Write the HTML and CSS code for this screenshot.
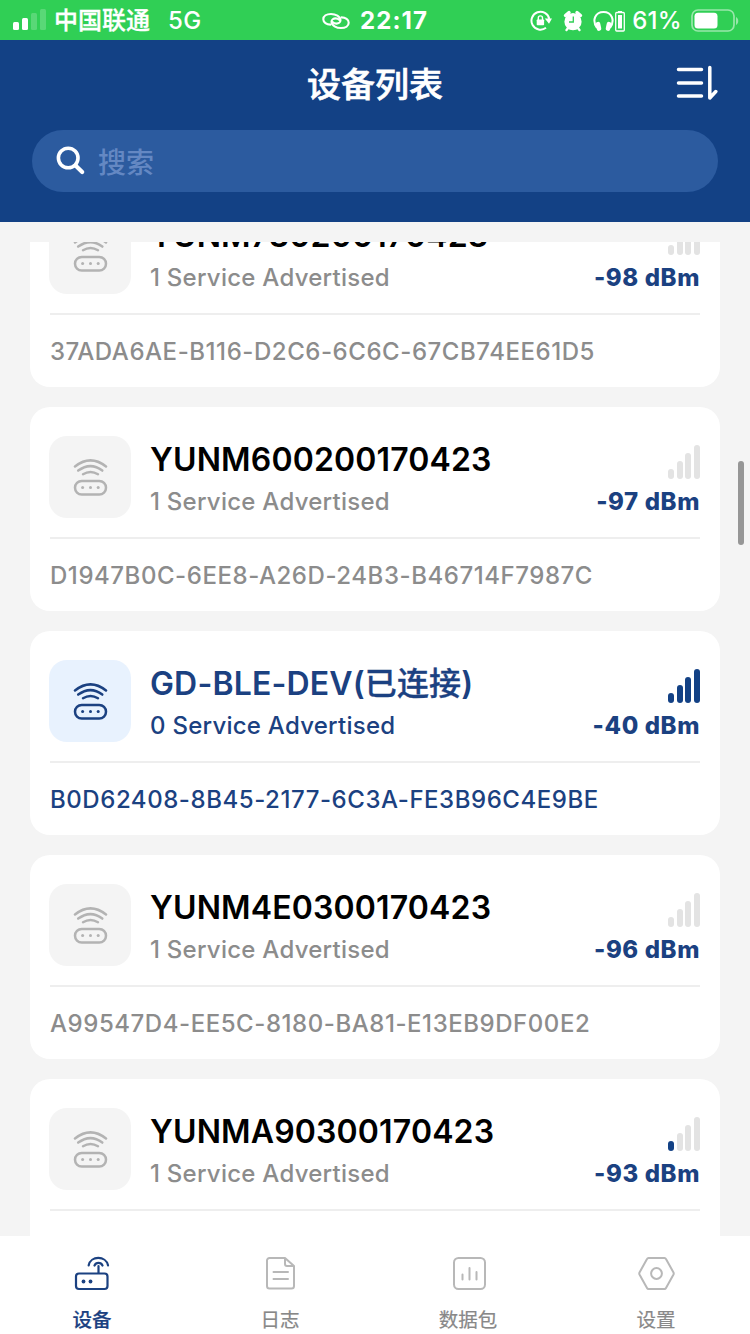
FILE: index.html
```html
<!DOCTYPE html>
<html lang="zh-CN">
<head>
    <meta charset="UTF-8">
    <meta name="viewport" content="width=device-width, initial-scale=1.0">
    <title>设备列表</title>
    <link rel="stylesheet" href="styles.css">
</head>
<body>
    <svg class="sprite">
        <symbol id="router" viewBox="0 0 36 40">
            <g fill="none" stroke="currentColor" stroke-width="2.5" stroke-linecap="round">
                <path d="M3 9.5Q18.5-2.8 34 9.5"/>
                <path d="M6.2 13.6Q18.5 4.600 30.3 13.6"/>
                <path d="M11 17.2Q18.5 12.600 26 17.2"/>
                <rect x="3" y="24" width="31" height="13.5" rx="6.750"/>
            </g>
            <g fill="currentColor">
                <circle cx="10.6" cy="30.4" r="1.5"/>
                <circle cx="18.5" cy="30.4" r="1.5"/>
                <circle cx="26.2" cy="30.4" r="1.5"/>
            </g>
        </symbol>
    </svg>

    <div class="status-bar">
        <div class="status-left">
            <svg width="36" height="24" viewBox="0 0 36 24" fill="#fff">
                <rect x="1" y="16" width="6" height="8" rx="1.5"/>
                <rect x="10" y="12" width="6" height="12" rx="1.5"/>
                <rect x="19" y="7" width="6" height="17" rx="1.5" opacity=".2"/>
                <rect x="28" y="3" width="6" height="21" rx="1.5" opacity=".2"/>
            </svg>
            <span class="carrier">中国联通</span>
            <span class="network">5G</span>
        </div>
        <div class="status-center">
            <svg width="28" height="18" viewBox="0 0 28 18" fill="none" stroke="#fff" stroke-width="2.1" stroke-linecap="round">
                <path d="M8.500 12.600C4.500 12.600 1.300 10.300 1.300 7.300C1.300 4 4.500 2 9 2C13.500 2 18.500 4.500 18.500 8.300C18.500 10.300 16.500 11.600 14.500 11.600C12.800 11.600 11.500 11 10.500 10"/>
                <path d="M19.500 5.400C23.500 5.400 26.700 7.700 26.700 10.700C26.700 14 23.500 16 19 16C14.500 16 9.500 13.500 9.500 9.700C9.500 7.700 11.500 6.400 13.500 6.400C15.200 6.400 16.500 7 17.500 8"/>
            </svg>
            <span class="clock">22:17</span>
        </div>
        <div class="status-right">
            <svg class="lock" width="22" height="22" viewBox="0 0 22 22">
                <path d="M16 17.800A9 9 0 1 1 19.300 9" fill="none" stroke="#fff" stroke-width="2"/>
                <path d="M14.800 8.500h7.200l-3 5.300z" fill="#fff"/>
                <rect x="6.700" y="9.500" width="7.400" height="5.800" rx=".8" fill="#fff"/>
                <path d="M8.300 10V8a2.100 2.100 0 0 1 4.200 0v2" fill="none" stroke="#fff" stroke-width="1.400"/>
            </svg>
            <svg class="alarm" width="20" height="22" viewBox="0 0 20 22">
                <path d="M2.500 5.500L6 2.600M17.500 5.500L14 2.600" stroke="#fff" stroke-width="3.400" stroke-linecap="round"/>
                <path d="M3.500 20l2.500-3M16.500 20l-2.500-3" stroke="#fff" stroke-width="2.400" stroke-linecap="round"/>
                <circle cx="10" cy="11.700" r="8.600" fill="#fff"/>
                <path d="M10.300 6.500v5.500H6" fill="none" stroke="#30cf55" stroke-width="1.300"/>
            </svg>
            <svg class="headphones" width="33" height="24" viewBox="0 0 33 24">
                <path d="M4 19C-1.500 11 2.500 3 10.500 3S22.500 11 17 19" fill="none" stroke="#fff" stroke-width="2"/>
                <rect x="3.200" y="13" width="4.500" height="9" rx="2" fill="#fff" transform="rotate(-12 5 17)"/>
                <rect x="13.300" y="13" width="4.500" height="9" rx="2" fill="#fff" transform="rotate(12 16 17)"/>
                <rect x="22.700" y="3.500" width="8.600" height="18.500" rx="1" fill="none" stroke="#fff" stroke-width="1.300"/>
                <path d="M25 2h4v1.500h-4zM25 6h4v13.500h-4z" fill="#fff"/>
            </svg>
            <span class="percent">61%</span>
            <svg class="battery" width="48" height="24" viewBox="0 0 48 24">
                <rect x="1" y="1" width="42" height="21" rx="6" fill="none" stroke="#fff" stroke-width="1.700" opacity=".5"/>
                <rect x="3.500" y="3.700" width="23" height="15.800" rx="3.500" fill="#fff"/>
                <path d="M45 8c3 1.500 3 6.500 0 8z" fill="#fff" opacity=".5"/>
            </svg>
        </div>
    </div>

    <header class="header">
        <div class="title-row">
            <h1>设备列表</h1>
            <svg class="sort" width="44" height="38" viewBox="0 0 44 38" fill="none" stroke="#fff" stroke-width="3.500" stroke-linecap="round" stroke-linejoin="round">
                <path d="M4.500 5.500h23M4.500 19h23M4.500 32h23M35.800 3.500v30.500l6-6.500"/>
            </svg>
        </div>
        <div class="search">
            <svg width="30" height="30" viewBox="0 0 30 30" fill="none" stroke="#fff" stroke-width="3.600" stroke-linecap="round">
                <circle cx="12.200" cy="12" r="9.800"/>
                <path d="M19.500 19.500l6.700 6.500" stroke-width="4.200"/>
            </svg>
            <span>搜索</span>
        </div>
    </header>

    <main class="list">
        <div class="card">
            <div class="info">
                <div class="tile"><svg><use href="#router"/></svg></div>
                <div class="text">
                    <div class="name">YUNM730200170423</div>
                    <div class="service">1 Service Advertised</div>
                </div>
                <div class="rssi">
                    <div class="bars"><i></i><i></i><i></i><i></i></div>
                    <div class="dbm">-98 dBm</div>
                </div>
            </div>
            <div class="uuid">37ADA6AE-B116-D2C6-6C6C-67CB74EE61D5</div>
        </div>
        <div class="card">
            <div class="info">
                <div class="tile"><svg><use href="#router"/></svg></div>
                <div class="text">
                    <div class="name">YUNM600200170423</div>
                    <div class="service">1 Service Advertised</div>
                </div>
                <div class="rssi">
                    <div class="bars"><i></i><i></i><i></i><i></i></div>
                    <div class="dbm">-97 dBm</div>
                </div>
            </div>
            <div class="uuid">D1947B0C-6EE8-A26D-24B3-B46714F7987C</div>
        </div>
        <div class="card connected">
            <div class="info">
                <div class="tile"><svg><use href="#router"/></svg></div>
                <div class="text">
                    <div class="name">GD-BLE-DEV(<span class="state">已连接</span>)</div>
                    <div class="service">0 Service Advertised</div>
                </div>
                <div class="rssi">
                    <div class="bars"><i class="on"></i><i class="on"></i><i class="on"></i><i class="on"></i></div>
                    <div class="dbm">-40 dBm</div>
                </div>
            </div>
            <div class="uuid">B0D62408-8B45-2177-6C3A-FE3B96C4E9BE</div>
        </div>
        <div class="card">
            <div class="info">
                <div class="tile"><svg><use href="#router"/></svg></div>
                <div class="text">
                    <div class="name">YUNM4E0300170423</div>
                    <div class="service">1 Service Advertised</div>
                </div>
                <div class="rssi">
                    <div class="bars"><i></i><i></i><i></i><i></i></div>
                    <div class="dbm">-96 dBm</div>
                </div>
            </div>
            <div class="uuid">A99547D4-EE5C-8180-BA81-E13EB9DF00E2</div>
        </div>
        <div class="card">
            <div class="info">
                <div class="tile"><svg><use href="#router"/></svg></div>
                <div class="text">
                    <div class="name">YUNMA90300170423</div>
                    <div class="service">1 Service Advertised</div>
                </div>
                <div class="rssi">
                    <div class="bars"><i class="on"></i><i></i><i></i><i></i></div>
                    <div class="dbm">-93 dBm</div>
                </div>
            </div>
        </div>
    </main>
    <div class="scrollbar"></div>

    <nav class="tabs">
        <div class="tab active">
            <svg width="40" height="40" viewBox="0 0 40 40" fill="none" stroke="currentColor" stroke-width="2.200" stroke-linecap="round">
                <rect x="4" y="20.500" width="31.500" height="15.500" rx="3"/>
                <path d="M26.500 20v-7M22.500 12.500a4.400 4.400 0 0 1 8 0M16.700 12.300C18.500 2.500 34 2.500 36 12.300"/>
                <circle cx="11.500" cy="28.500" r="1.900" fill="currentColor" stroke="none"/>
                <circle cx="18.500" cy="28.500" r="1.900" fill="currentColor" stroke="none"/>
            </svg>
            <span>设备</span>
        </div>
        <div class="tab">
            <svg width="40" height="40" viewBox="0 0 40 40" fill="none" stroke="currentColor" stroke-width="2" stroke-linecap="round" stroke-linejoin="round">
                <path d="M9.500 5h15.500l9 8v20a2.500 2.500 0 0 1-2.500 2.500h-22A2.500 2.500 0 0 1 7 33V7.500A2.500 2.500 0 0 1 9.500 5zM25 5v6a2 2 0 0 0 2 2h7M13.500 19h14.500M13.500 26h14.500"/>
            </svg>
            <span>日志</span>
        </div>
        <div class="tab">
            <svg width="40" height="40" viewBox="0 0 40 40" fill="none" stroke="currentColor" stroke-width="2" stroke-linecap="round">
                <rect x="6" y="5" width="31" height="31" rx="4.500"/>
                <path d="M14.500 21.500v5M21.500 15v11.500M28.500 19v7.500"/>
            </svg>
            <span>数据包</span>
        </div>
        <div class="tab">
            <svg width="40" height="40" viewBox="0 0 40 40" fill="none" stroke="currentColor" stroke-width="2" stroke-linejoin="round">
                <path d="M12.500 5h16q1 0 1.500 1l7.500 13.500q.5 1 0 2L30 35q-.5 1-1.500 1h-16q-1 0-1.500-1L3.500 21.500q-.5-1 0-2L11 6q.5-1 1.500-1z"/>
                <circle cx="20.500" cy="20.500" r="5.400"/>
            </svg>
            <span>设置</span>
        </div>
    </nav>
</body>
</html>
```
FILE: styles.css
```css
* {
    box-sizing: border-box;
}
body {
    margin: 0;
    width: 750px;
    height: 1334px;
    overflow: hidden;
    display: flex;
    flex-direction: column;
    position: relative;
    background-color: #f4f4f4;
    font-family: Inter, "Noto Sans CJK SC", sans-serif;
}
svg {
    display: block;
    flex: none;
}
.sprite {
    position: absolute;
    width: 0;
    height: 0;
}

/* Status bar */
.status-bar {
    flex: none;
    height: 40px;
    display: grid;
    grid-template-columns: 1fr auto 1fr;
    align-items: center;
    background-color: #30cf55;
    color: #fff;
    line-height: 42px;
}
.status-left, .status-center, .status-right {
    display: flex;
    align-items: center;
}
.status-left {
    padding-left: 12px;
}
.status-left svg {
    margin-top: -6px;
}
.carrier {
    margin-left: 6px;
    font-size: 24px;
    font-weight: 500;
    -webkit-text-stroke: 0.3px #fff;
}
.network {
    margin-left: 18px;
    font-size: 24px;
    font-weight: 500;
    letter-spacing: 0.3px;
}
.status-center svg {
    margin-right: 10px;
}
.clock {
    font-size: 24px;
    font-weight: 700;
    letter-spacing: 1.1px;
}
.status-right {
    justify-content: flex-end;
    padding-right: 11px;
}
.alarm {
    margin-left: 11px;
}
.headphones {
    margin-left: 10px;
}
.percent {
    margin-left: 6px;
    font-size: 24px;
    font-weight: 500;
    letter-spacing: 0.3px;
}
.battery {
    margin-left: 9px;
}

/* Header */
.header {
    flex: none;
    height: 182px;
    padding: 0 32px;
    background-color: #134185;
    color: #fff;
}
.title-row {
    height: 90px;
    display: grid;
    grid-template-columns: 44px 1fr 44px;
    align-items: center;
}
h1 {
    grid-column: 2;
    margin: 0;
    font-size: 34px;
    font-weight: 500;
    line-height: 90px;
    text-align: center;
    -webkit-text-stroke: 0.6px #fff;
}
.sort {
    margin-top: -4px;
}
.search {
    height: 62px;
    display: flex;
    align-items: center;
    padding-left: 24px;
    border-radius: 31px;
    background-color: #2c5b9f;
    font-size: 28px;
}
.search span {
    margin-left: 12px;
    font-weight: 500;
    color: #6488c3;
}

/* Device list */
.list {
    flex: none;
    height: 994px;
    margin-top: 20px;
    padding: 0 30px;
    overflow: hidden;
}
.card {
    height: 204px;
    margin-bottom: 20px;
    padding: 29px 20px 0;
    border-radius: 20px;
    background-color: #fff;
    color: #8c8c8c;
}
/* the list is scrolled part way through its first card */
.card:first-child {
    margin-top: -59px;
}
.info {
    display: flex;
    height: 103px;
    border-bottom: 2px solid #eee;
}
.tile {
    width: 82px;
    height: 82px;
    margin-left: -1px;
    display: flex;
    align-items: center;
    justify-content: center;
    border-radius: 18px;
    background-color: #f4f4f4;
    color: #b3b3b3;
}
.tile svg {
    width: 36px;
    height: 40px;
}
.text {
    flex: 1;
    margin-left: 19px;
    white-space: nowrap;
}
.name {
    height: 46px;
    line-height: 48px;
    font-size: 32px;
    font-weight: 600;
    letter-spacing: 0.15px;
    color: #000;
}
.state {
    font-weight: 500;
    -webkit-text-stroke: 0.3px #1b4181;
}
.service {
    height: 38px;
    line-height: 39px;
    font-size: 24px;
    font-weight: 500;
    letter-spacing: 0.25px;
}
.rssi {
    display: flex;
    flex-direction: column;
    align-items: flex-end;
}
.bars {
    height: 46px;
    padding: 9px 0 3px;
    display: flex;
    align-items: flex-end;
    gap: 2.7px;
}
.bars i {
    width: 6px;
    height: 10px;
    border-radius: 3px;
    background-color: #e3e3e3;
}
.bars i:nth-child(2) {
    height: 18px;
}
.bars i:nth-child(3) {
    height: 26px;
}
.bars i:nth-child(4) {
    height: 34px;
}
.bars .on {
    background-color: #134185;
}
.dbm {
    height: 38px;
    line-height: 39px;
    font-size: 24px;
    font-weight: 800;
    letter-spacing: 0.6px;
    color: #1b4181;
}
.uuid {
    height: 72px;
    line-height: 73px;
    font-size: 24px;
    font-weight: 500;
    letter-spacing: 0.55px;
}
.connected, .connected .name {
    color: #1b4181;
}
.connected .tile {
    background-color: #e8f2fe;
    color: #1b4181;
}
.scrollbar {
    position: absolute;
    right: 6px;
    top: 461px;
    width: 6px;
    height: 84px;
    border-radius: 3px;
    background-color: #969696;
}

/* Tab bar */
.tabs {
    flex: none;
    height: 98px;
    display: grid;
    grid-template-columns: repeat(4, 188px);
    margin-left: -2px;
    background-color: #fff;
}
.tab {
    display: flex;
    flex-direction: column;
    align-items: center;
    padding-top: 17px;
    color: #b8b8b8;
}
.tab span {
    margin-top: 12px;
    font-size: 19.5px;
    line-height: 30px;
    color: #888;
    -webkit-text-stroke: 0.2px #888;
}
.tab.active, .tab.active span {
    color: #1b4181;
    font-weight: 500;
}
.tab.active span {
    -webkit-text-stroke-color: #1b4181;
}
```
